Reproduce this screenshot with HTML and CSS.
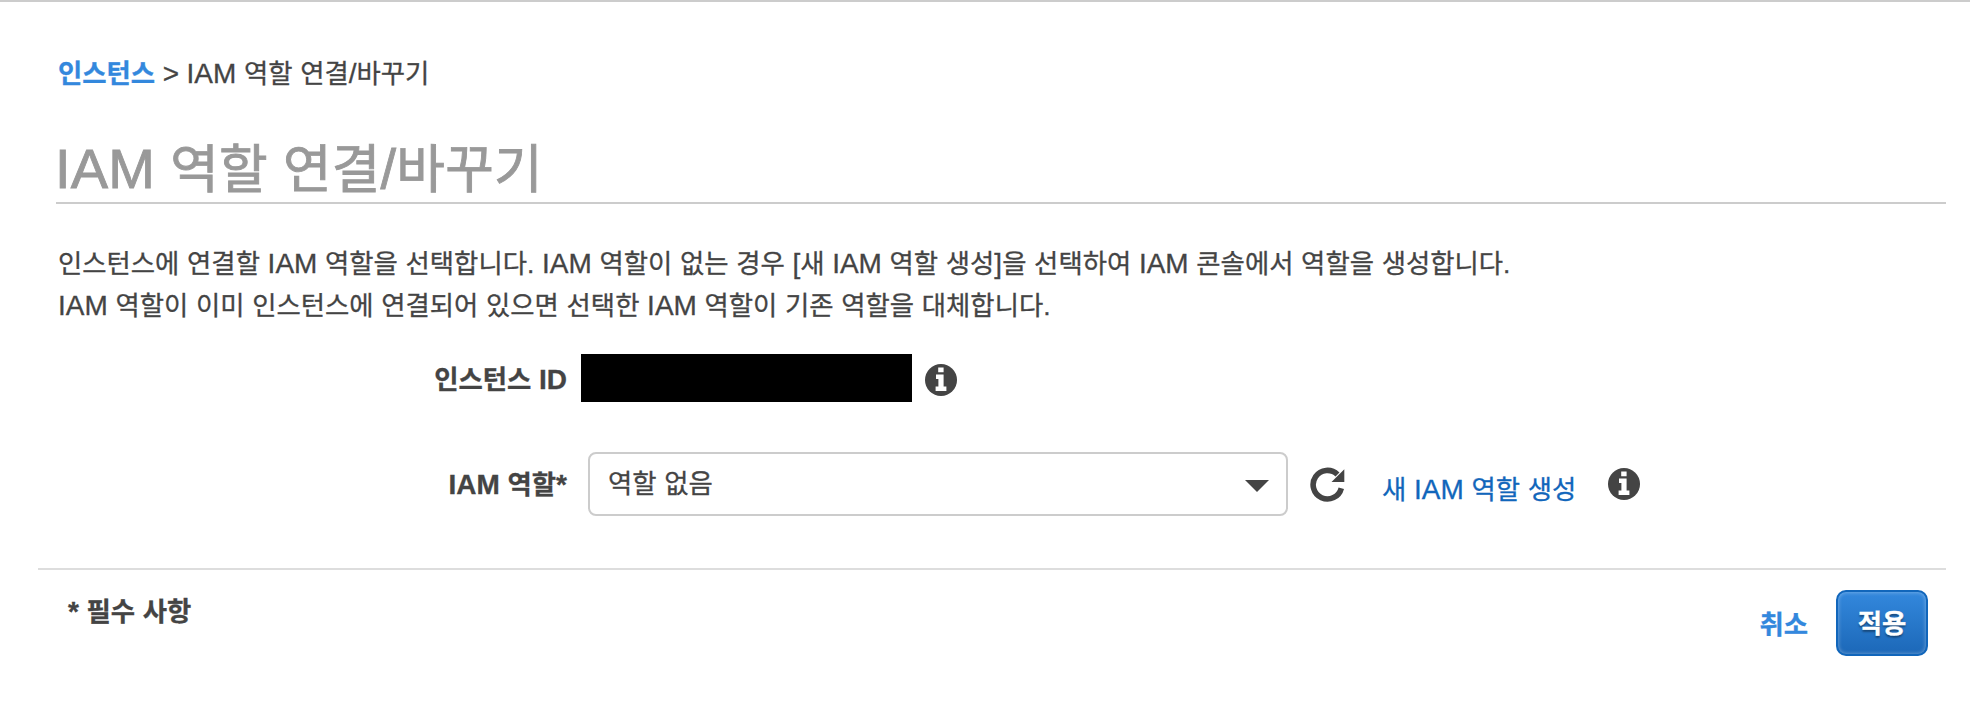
FILE: index.html
```html
<!DOCTYPE html>
<html lang="ko">
<head>
<meta charset="utf-8">
<title>IAM 역할 연결/바꾸기</title>
<link rel="stylesheet" href="styles.css">
</head>
<body>
<svg class="defs" aria-hidden="true">
  <symbol id="info" viewBox="0 0 32 32">
    <circle cx="16" cy="16" r="16" fill="#444"/>
    <path d="M13.2 3.6h5.4v4.6h-5.4zM11 10.600h7.600v12h2.800v4.400H10.600v-4.400h2.800v-7.600H11z" fill="#fff"/>
  </symbol>
</svg>
<main class="page">
  <nav class="crumbs"><a class="crumb-link" href="#">인스턴스</a><span class="sep en">&gt;</span><span><span class="en">IAM</span> 역할 연결<span class="en">/</span>바꾸기</span></nav>
  <h1 class="title"><span class="en">IAM</span> 역할 연결<span class="en">/</span>바꾸기</h1>
  <p class="intro">인스턴스에 연결할 <span class="en">IAM</span> 역할을 선택합니다. <span class="en">IAM</span> 역할이 없는 경우 <span class="en">[</span>새 <span class="en">IAM</span> 역할 생성<span class="en">]</span>을 선택하여 <span class="en">IAM</span> 콘솔에서 역할을 생성합니다.<br><span class="en">IAM</span> 역할이 이미 인스턴스에 연결되어 있으면 선택한 <span class="en">IAM</span> 역할이 기존 역할을 대체합니다.</p>
  <div class="row row-id">
    <span class="label">인스턴스 <span class="en">ID</span></span>
    <span class="redacted"></span>
    <svg class="info"><use href="#info"/></svg>
  </div>
  <div class="row row-role">
    <span class="label"><span class="en">IAM</span> 역할<span class="en">*</span></span>
    <div class="select"><span>역할 없음</span><svg class="caret" viewBox="0 0 24 12"><path d="M0 0h24L12 12z" fill="#444"/></svg></div>
    <svg class="refresh" viewBox="0 0 36 36"><path d="M31.300 22.200A14.300 14.300 0 1 1 27.500 8.500" fill="none" stroke="#444" stroke-width="5.600"/><path d="M34.300 3.200v12.800H21.500z" fill="#444"/></svg>
    <a class="create" href="#">새 <span class="en">IAM</span> 역할 생성</a>
    <svg class="info"><use href="#info"/></svg>
  </div>
  <footer class="footer">
    <span class="required"><span class="en">*</span> 필수 사항</span>
    <div class="actions"><a class="cancel" href="#">취소</a><button class="apply" type="button">적용</button></div>
  </footer>
</main>
</body>
</html>
```
FILE: styles.css
```css
* { box-sizing: border-box; }
body {
  margin: 0;
  background: #fff;
  color: #444;
  font-family: "Liberation Sans", "Noto Sans CJK KR", sans-serif;
  font-size: 26.4px;
  line-height: 42px;
  word-spacing: .35px;
  -webkit-text-stroke: .3px currentColor;
}
a { text-decoration: none; }
.defs { position: absolute; width: 0; height: 0; }
.en { font-size: 1.06em; line-height: 1; }
.page {
  height: 702px;
  border-top: 2px solid #ccc;
  padding: 51px 24px 0 38px;
}
.crumbs { display: flex; align-items: baseline; height: 42px; padding-left: 20px; white-space: nowrap; }
.crumb-link { color: #3388dd; font-weight: 700; }
.sep { margin: 0 7.5px; }
.title {
  height: 77px;
  margin: 32px 0 0 18px;
  padding: 0;
  border-bottom: 2px solid #ccc;
  color: #999;
  font-size: 52.8px;
  font-weight: 400;
  line-height: 86px;
  letter-spacing: .2px;
  text-indent: -1px;
  white-space: nowrap;
  -webkit-text-stroke-width: .9px;
}
.intro { margin: 39px 0 0 20px; white-space: nowrap; }
.row { display: flex; align-items: center; }
.row-id { height: 48px; margin-top: 27px; }
.row-id .label { padding-top: 3px; }
.row-id .info { margin-top: 4px; }
.row-role { height: 64px; margin-top: 50px; }
.row-role .label { padding-top: 1px; }
.label { width: 530px; padding-right: 1px; text-align: right; font-weight: 700; white-space: nowrap; }
.redacted { width: 331px; height: 48px; margin: 0 13px; background: #000; }
.info { width: 32px; height: 32px; flex: none; }
.select {
  display: flex;
  align-items: center;
  justify-content: space-between;
  width: 700px;
  height: 64px;
  margin-left: 20px;
  padding: 0 17px 0 18px;
  border: 2px solid #ccc;
  border-radius: 8px;
}
.caret { width: 24px; height: 12px; margin-top: 4px; }
.refresh { width: 36px; height: 36px; margin-left: 22px; }
.create { width: 226px; margin: 12px 0 0 36px; color: #1166bb; white-space: nowrap; }
.footer {
  display: flex;
  justify-content: space-between;
  align-items: flex-start;
  margin-top: 52px;
  padding: 20px 18px 0 30px;
  border-top: 2px solid #ddd;
  font-weight: 700;
}
.required { padding-top: 1px; }
.actions { display: flex; align-items: center; gap: 28px; }
.cancel { padding-top: 3px; color: #3388dd; }
.apply {
  width: 92px;
  height: 66px;
  padding: 2px 0 0;
  border: 2px solid #1166bb;
  border-radius: 10px;
  background: linear-gradient(#3388dd, #1c68b8);
  box-shadow: inset 0 0 4px rgba(255, 255, 255, .4);
  color: #fff;
  font: inherit;
  text-shadow: 0 2px 2px rgba(0, 0, 0, .4);
}
```
